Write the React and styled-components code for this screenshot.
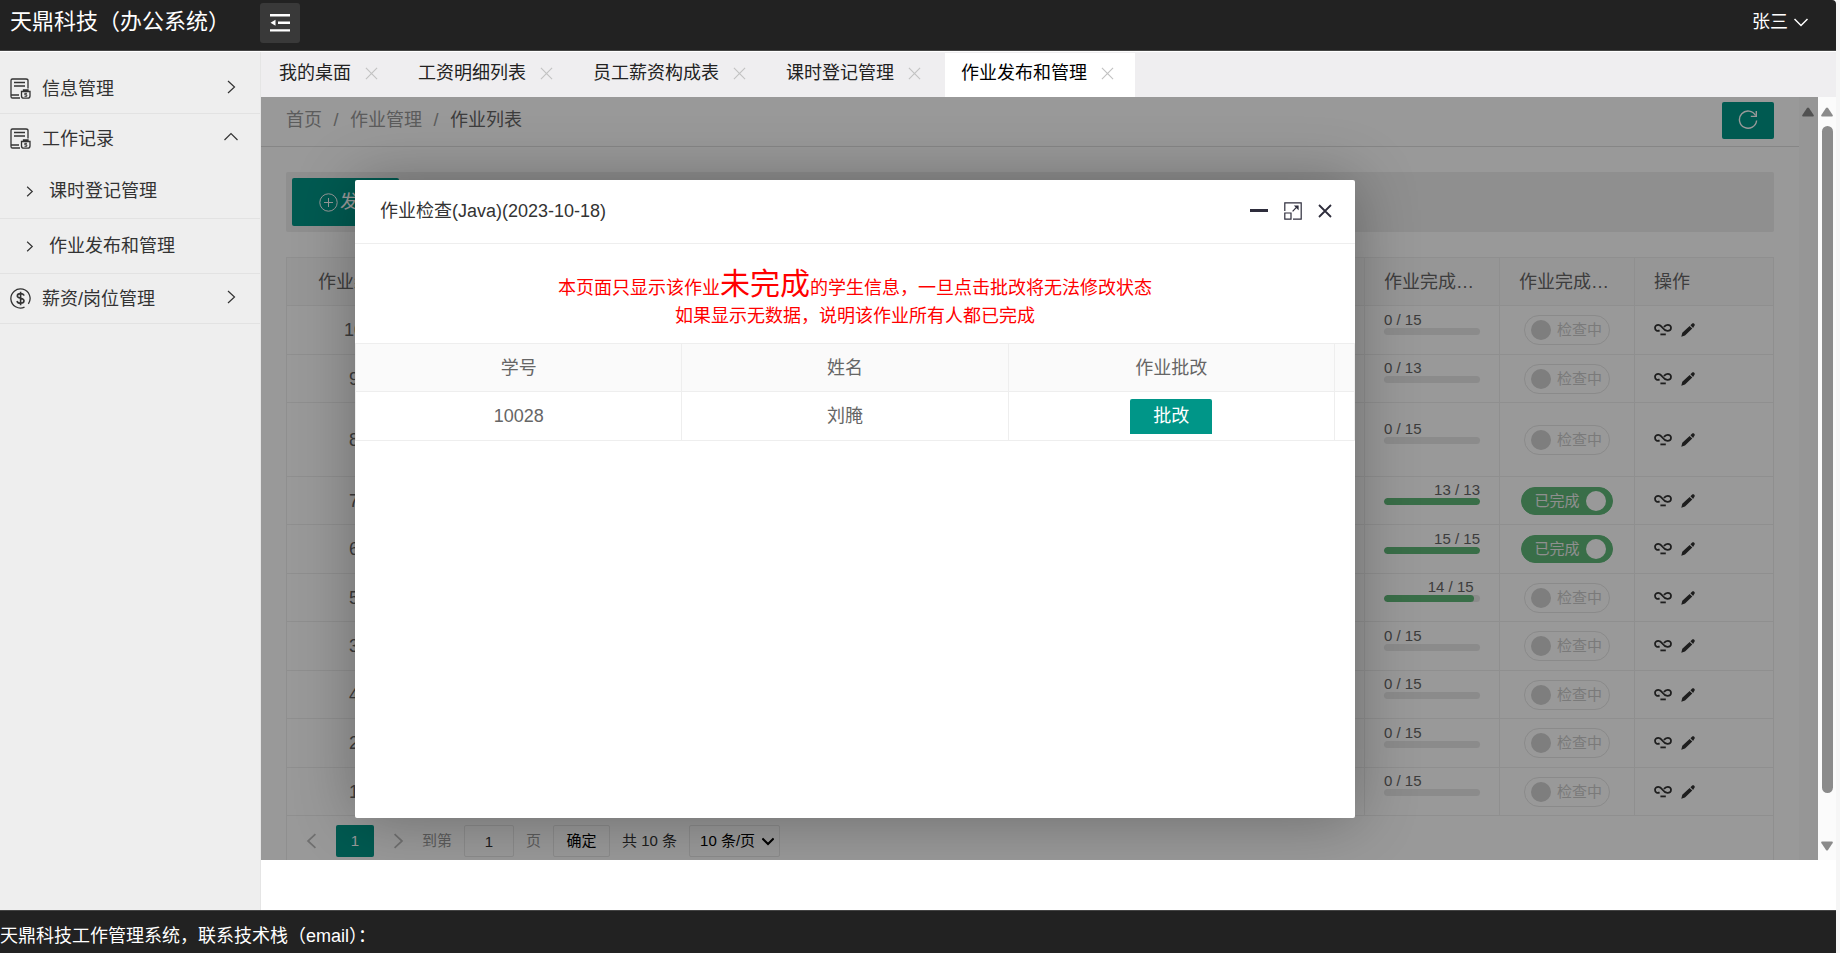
import React, { useState } from 'react';
import styled, { createGlobalStyle } from 'styled-components';

const tabs = ['我的桌面', '工资明细列表', '员工薪资构成表', '课时登记管理', '作业发布和管理'];

const homework = [
  { id: 10, done: 0, total: 15 },
  { id: 9, done: 0, total: 13 },
  { id: 8, done: 0, total: 15, tall: true },
  { id: 7, done: 13, total: 13, checked: true },
  { id: 6, done: 15, total: 15, checked: true },
  { id: 5, done: 14, total: 15 },
  { id: 3, done: 0, total: 15 },
  { id: 4, done: 0, total: 15 },
  { id: 2, done: 0, total: 15 },
  { id: 1, done: 0, total: 15 },
];

const Chevron = ({ size = 14, dir = 'right', width = 1.2 }) => {
  const d = {
    right: 'M4 1 L10.5 7 L4 13',
    left: 'M10 1 L3.5 7 L10 13',
    up: 'M0.5 10 L7 3.5 L13.5 10',
    down: 'M0.5 4 L7 10.5 L13.5 4',
  }[dir];
  return (
    <svg width={size} height={size} viewBox='0 0 14 14' fill='none' stroke='currentColor' strokeWidth={width} aria-hidden='true'>
      <path d={d} />
    </svg>
  );
};

const CrossIcon = ({ size, width = 1.2 }) => (
  <svg width={size} height={size} viewBox='0 0 14 14' fill='none' stroke='currentColor' strokeWidth={width} aria-hidden='true'>
    <path d='M1 1 L13 13 M13 1 L1 13' />
  </svg>
);

const FoldIcon = () => (
  <svg width='20' height='18' viewBox='0 0 20 18' fill='currentColor' aria-hidden='true'>
    <path d='M0 0h20v2.4H0z M8 7.6h12V10H8z M0 15.2h20v2.4H0z M0.5 8.8 L5.5 5.8 V11.8z' />
  </svg>
);

const DocIcon = () => (
  <svg width='21' height='21' viewBox='0 0 21 21' fill='none' stroke='currentColor' strokeWidth='1.3' aria-hidden='true'>
    <path d='M10 20H2.5C1.4 20 1 19.4 1 18.4V2.4C1 1.4 1.5 1 2.5 1H16C17.4 1 18 1.5 18 2.6V10.5' />
    <path d='M4 4.5H15 M4 8H15 M1 17H9' />
    <path d='M11.5 13.5H20V18C20 19.5 19 20.2 17.5 20.2H14C12.5 20.2 11.5 19.5 11.5 18Z M13.5 13V12H18V13' />
    <path d='M17 15.3H14.8V16.8H16.8V18.3H14.5' strokeWidth='1' />
  </svg>
);

const MoneyIcon = () => (
  <svg width='21' height='21' viewBox='0 0 21 21' fill='none' stroke='currentColor' strokeWidth='1.3' aria-hidden='true'>
    <path d='M14.5 19.2A9.6 9.6 0 1 1 18.4 15.9' />
    <path d='M14 7.6C13.6 6.2 12.3 5.6 10.5 5.6C8.6 5.6 7.3 6.5 7.3 7.9C7.3 11 14 9.5 14 12.8C14 14.3 12.5 15.3 10.6 15.3C8.6 15.3 7.3 14.5 7 13 M10.6 3.8V17.2' strokeWidth='1.6' />
  </svg>
);

const RefreshIcon = () => (
  <svg width='20' height='20' viewBox='0 0 20 20' fill='none' stroke='currentColor' strokeWidth='1.4' aria-hidden='true'>
    <path d='M17.6 5.5A8.6 8.6 0 1 0 18.6 10.5' />
    <path d='M18.3 1V6.4H12.8' />
  </svg>
);

const AddIcon = () => (
  <svg width='19' height='19' viewBox='0 0 19 19' fill='none' stroke='currentColor' strokeWidth='1' aria-hidden='true'>
    <circle cx='9.5' cy='9.5' r='8.7' />
    <path d='M9.5 5V14 M5 9.5H14' />
  </svg>
);

const UnlinkIcon = () => (
  <svg width='18' height='14' viewBox='0 0 18 14' fill='none' stroke='currentColor' strokeWidth='1.8' aria-hidden='true'>
    <path d='M5.6 7.4C3.2 8.6 1 7.2 1 4.8C1 2.9 2.5 1.8 4.4 1.8C8.6 1.8 8.6 7.9 13.4 7.9C15.6 7.9 17 6.6 17 4.8C17 3 15.6 1.8 13.8 1.8C12 1.8 10.8 2.6 10 4' />
    <path d='M6.4 11.4H11.8' />
  </svg>
);

const PencilIcon = () => (
  <svg width='14' height='14' viewBox='0 0 14 14' fill='currentColor' aria-hidden='true'>
    <path d='M0.3 13.7L1.3 9.8L8.6 2.9L11.3 5.6L4 12.6Z M9.4 2.2L11.2 0.5C11.8 0 12.5 0 13 0.6L13.4 1C14 1.6 13.9 2.3 13.4 2.8L12.1 4.9Z' />
  </svg>
);

const MaxIcon = () => (
  <svg width='18' height='18' viewBox='0 0 18 18' fill='none' stroke='currentColor' strokeWidth='1.2' aria-hidden='true'>
    <path d='M0.8 9V0.8H17.2V17.2H9' />
    <path d='M0.8 11H7V17.2H0.8Z' />
    <path d='M8.6 9.4L13.6 4.2' />
    <path d='M9.8 3.4H14.6V8.2Z' fill='currentColor' stroke='none' />
  </svg>
);

const ArrowIcon = ({ down }) => (
  <svg width='12' height='10' viewBox='0 0 12 10' fill='currentColor' aria-hidden='true'>
    <path d={down ? 'M1 0.5H11Q12.4 0.8 11.5 2.2L7 9Q6 10 5 9L0.5 2.2Q-0.4 0.8 1 0.5Z' : 'M1 9.5H11Q12.4 9.2 11.5 7.8L7 1Q6 0 5 1L0.5 7.8Q-0.4 9.2 1 9.5Z'} />
  </svg>
);

const App = () => {
  const [rows, setRows] = useState(homework);
  const [open, setOpen] = useState(true);

  const toggle = (id) => {
    setRows(rows.map((r) => (r.id === id ? { ...r, checked: !r.checked } : r)));
  };

  return (
    <>
      <GlobalStyle />
      <Shell>
        <Header>
          <Logo>天鼎科技（办公系统）</Logo>
          <FoldButton type='button' aria-label='fold'><FoldIcon /></FoldButton>
          <User href='#user'>张三 <Chevron dir='down' width={1.5} /></User>
        </Header>
        <Body>
          <Sidebar>
            <MenuItem href='#info'><DocIcon /><span>信息管理</span><Chevron /></MenuItem>
            <MenuItem href='#work' $open><DocIcon /><span>工作记录</span><Chevron dir='up' /></MenuItem>
            <SubItem href='#lesson'><Chevron size={11} width={1.5} /><span>课时登记管理</span></SubItem>
            <SubItem href='#homework'><Chevron size={11} width={1.5} /><span>作业发布和管理</span></SubItem>
            <MenuItem href='#salary'><MoneyIcon /><span>薪资/岗位管理</span><Chevron /></MenuItem>
          </Sidebar>
          <Main>
            <TabBar>
              {tabs.map((t, i) => (
                <Tab key={t} $active={i === tabs.length - 1}>
                  <span>{t}</span>
                  <TabClose type='button' aria-label='close'><CrossIcon size={13} /></TabClose>
                </Tab>
              ))}
            </TabBar>
            <FrameRow>
              <Frame>
                <Page>
                  <Crumbs>
                    <a href='#home'>首页</a><i>/</i><a href='#manage'>作业管理</a><i>/</i><strong>作业列表</strong>
                    <Refresh type='button' aria-label='refresh'><RefreshIcon /></Refresh>
                  </Crumbs>
                  <Content>
                    <Toolbar>
                      <Publish type='button' onClick={() => setOpen(true)}><AddIcon />发布</Publish>
                    </Toolbar>
                    <TableBox>
                      <Table>
                        <colgroup>
                          <Col $w={135} /><col /><Col $w={135} /><Col $w={135} /><Col $w={138} />
                        </colgroup>
                        <thead>
                          <tr>
                            <Th $center>作业编号</Th><Th /><Th>作业完成…</Th><Th>作业完成…</Th><Th>操作</Th>
                          </tr>
                        </thead>
                        <tbody>
                          {rows.map((r) => (
                            <Row key={r.id} $tall={r.tall}>
                              <Td $center>{r.id}</Td>
                              <Td />
                              <Td>
                                <Progress>
                                  <ProgressText style={r.done ? { width: `${(r.done / r.total) * 100}%` } : undefined} $end={r.done > 0}>
                                    {r.done} / {r.total}
                                  </ProgressText>
                                  <Track><Fill style={{ width: `${(r.done / r.total) * 100}%` }} /></Track>
                                </Progress>
                              </Td>
                              <Td $center>
                                <Switch $on={r.checked}>
                                  <input type='checkbox' checked={!!r.checked} onChange={() => toggle(r.id)} />
                                  {r.checked ? '已完成' : '检查中'}
                                </Switch>
                              </Td>
                              <Td>
                                <Actions>
                                  <button type='button' aria-label='check' onClick={() => setOpen(true)}><UnlinkIcon /></button>
                                  <button type='button' aria-label='edit'><PencilIcon /></button>
                                </Actions>
                              </Td>
                            </Row>
                          ))}
                        </tbody>
                      </Table>
                      <Pager>
                        <Arrow type='button' aria-label='prev'><Chevron size={16} dir='left' width={1.5} /></Arrow>
                        <Current type='button'>1</Current>
                        <Arrow type='button' aria-label='next'><Chevron size={16} width={1.5} /></Arrow>
                        <Skip>
                          <label htmlFor='page'>到第</label>
                          <input id='page' defaultValue='1' />
                          <label htmlFor='page'>页</label>
                          <button type='button'>确定</button>
                        </Skip>
                        <Count>共 10 条</Count>
                        <Limit>
                          <select aria-label='limit' defaultValue='10'>
                            <option value='10'>10 条/页</option>
                          </select>
                          <Chevron size={12} dir='down' width={2.4} />
                        </Limit>
                      </Pager>
                    </TableBox>
                  </Content>
                </Page>
                <InnerBar><ArrowIcon /></InnerBar>
                {open && (
                  <>
                    <Shade />
                    <Dialog role='dialog' aria-labelledby='dialog-title'>
                      <DialogHead>
                        <h2 id='dialog-title'>作业检查(Java)(2023-10-18)</h2>
                        <MinButton type='button' aria-label='min' />
                        <HeadButton type='button' aria-label='max'><MaxIcon /></HeadButton>
                        <HeadButton type='button' aria-label='close' onClick={() => setOpen(false)}><CrossIcon size={14} width={1.8} /></HeadButton>
                      </DialogHead>
                      <Notice>
                        本页面只显示该作业<big>未完成</big>的学生信息，一旦点击批改将无法修改状态<br />
                        如果显示无数据，说明该作业所有人都已完成
                      </Notice>
                      <StudentTable>
                        <colgroup>
                          <col /><col /><col /><Col $w={20} />
                        </colgroup>
                        <thead>
                          <tr><th>学号</th><th>姓名</th><th>作业批改</th><th /></tr>
                        </thead>
                        <tbody>
                          <tr>
                            <td>10028</td>
                            <td>刘腌</td>
                            <td><Correct type='button'>批改</Correct></td>
                            <td />
                          </tr>
                        </tbody>
                      </StudentTable>
                    </Dialog>
                  </>
                )}
              </Frame>
              <ScrollBar>
                <ArrowIcon />
                <Thumb />
                <Rest />
                <ArrowIcon down />
              </ScrollBar>
            </FrameRow>
          </Main>
        </Body>
        <Footer>天鼎科技工作管理系统，联系技术栈（email）：</Footer>
      </Shell>
    </>
  );
};

const GlobalStyle = createGlobalStyle`
  * {
    box-sizing: border-box;
  }
  body {
    margin: 0;
    background: #f6f6f6;
    color: #333;
    font-family: 'Liberation Sans', 'Noto Sans CJK SC', sans-serif;
    font-size: 18px;
    line-height: 24px;
  }
  button, input, select {
    font: inherit;
    color: inherit;
    margin: 0;
    padding: 0;
    border: none;
    background: none;
  }
  button {
    cursor: pointer;
  }
  a {
    color: inherit;
    text-decoration: none;
  }
`;

const Shell = styled.div`
  height: 100vh;
  margin-right: 4px;
  display: flex;
  flex-direction: column;
  background: #fff;
  white-space: nowrap;
`;

const Header = styled.header`
  height: 51px;
  flex-shrink: 0;
  display: flex;
  align-items: flex-start;
  padding: 3px 28px 0 10px;
  background: #222;
  border-bottom: 1px solid #444;
  border-radius: 0 4px 0 0;
  color: #fff;
`;

const Logo = styled.h1`
  width: 250px;
  margin: 0;
  font-size: 22px;
  font-weight: normal;
  line-height: 38px;
`;

const FoldButton = styled.button`
  width: 40px;
  height: 40px;
  display: flex;
  align-items: center;
  justify-content: center;
  border-radius: 3px;
  background: #393939;
`;

const User = styled.a`
  margin-left: auto;
  display: flex;
  align-items: center;
  gap: 6px;
  line-height: 38px;
`;

const Body = styled.div`
  flex: 1;
  min-height: 0;
  display: flex;
  padding-top: 1px;
`;

const Sidebar = styled.nav`
  width: 261px;
  flex-shrink: 0;
  padding-top: 12px;
  background: #eee;
  border-right: 1px solid #e5e5e5;
`;

const MenuItem = styled.a`
  height: 50px;
  display: flex;
  align-items: center;
  padding: 0 22px 0 10px;
  border-bottom: 1px solid ${(p) => (p.$open ? 'transparent' : '#e2e2e2')};
  span {
    flex: 1;
    margin-left: 11px;
  }
  svg:last-child {
    margin-bottom: 4px;
  }
`;

const SubItem = styled.a`
  height: 55px;
  display: flex;
  align-items: center;
  gap: 14px;
  padding-left: 24px;
  border-bottom: 1px solid #e2e2e2;
`;

const Main = styled.main`
  flex: 1;
  min-width: 0;
  display: flex;
  flex-direction: column;
  padding-bottom: 50px;
`;

const TabBar = styled.div`
  height: 45px;
  flex-shrink: 0;
  display: flex;
  gap: 3px;
  padding: 1px 2px 0;
  background: #efeef0;
`;

const Tab = styled.div`
  display: flex;
  align-items: center;
  padding: 0 21px 4px 16px;
  color: ${(p) => (p.$active ? '#000' : '#222')};
  background: ${(p) => (p.$active ? '#fff' : 'transparent')};
`;

const TabClose = styled.button`
  display: flex;
  margin-left: 14px;
  color: #c2c2c2;
`;

const FrameRow = styled.div`
  flex: 1;
  min-height: 0;
  display: flex;
`;

const Frame = styled.section`
  position: relative;
  flex: 1;
  min-width: 0;
  display: flex;
  overflow: hidden;
  background: #fff;
`;

const Page = styled.div`
  flex: 1;
  min-width: 0;
  overflow: hidden;
`;

const InnerBar = styled.div`
  width: 19px;
  padding: 2px 3px;
  background: #fbfbfb;
  color: #888;
`;

const ScrollBar = styled.div`
  width: 18px;
  display: flex;
  flex-direction: column;
  align-items: center;
  padding: 10px 0 9px;
  background: #fbfbfb;
  color: #8b8b8b;
  svg {
    flex-shrink: 0;
  }
`;

const Thumb = styled.div`
  width: 11px;
  flex: 14;
  margin-top: 9px;
  border-radius: 6px;
  background: #8b8b8b;
`;

const Rest = styled.div`
  flex: 1;
`;

const Crumbs = styled.div`
  height: 50px;
  display: flex;
  align-items: center;
  padding: 0 25px 3px;
  border-bottom: 1px solid #e0e0e0;
  color: #999;
  i {
    width: 28px;
    text-align: center;
    font-style: normal;
  }
  strong {
    font-weight: normal;
    color: #666;
  }
`;

const Refresh = styled.button`
  width: 52px;
  height: 37px;
  margin-left: auto;
  display: flex;
  align-items: center;
  justify-content: center;
  border-radius: 2px;
  background: #009688;
  color: #fff;
`;

const Content = styled.div`
  display: flex;
  flex-direction: column;
  gap: 25px;
  padding: 25px;
`;

const Toolbar = styled.div`
  padding: 6px;
  background: #eee;
  border-radius: 2px;
`;

const Publish = styled.button`
  height: 48px;
  display: flex;
  align-items: center;
  gap: 2px;
  padding: 0 23px 0 27px;
  border-radius: 2px;
  background: #009688;
  color: #fff;
`;

const TableBox = styled.div`
  border: 1px solid #eee;
`;

const Table = styled.table`
  width: 100%;
  table-layout: fixed;
  border-collapse: separate;
  border-spacing: 0;
  color: #666;
`;

const Col = styled.col`
  width: ${(p) => p.$w}px;
`;

const Td = styled.td`
  height: inherit;
  padding: 0 19px;
  border-right: 1px solid #eee;
  border-bottom: 1px solid #eee;
  text-align: ${(p) => (p.$center ? 'center' : 'left')};
  &:last-child {
    border-right: none;
  }
`;

const Th = styled(Td).attrs({ as: 'th' })`
  height: 48px;
  font-weight: normal;
  background: #fafafa;
`;

const Row = styled.tr`
  height: ${(p) => (p.$tall ? 74 : 49)}px;
  &:nth-child(even) {
    height: 48px;
  }
`;

const Progress = styled.div`
  padding-bottom: 14px;
  font-size: 15px;
  line-height: 16px;
`;

const ProgressText = styled.div`
  text-align: ${(p) => (p.$end ? 'right' : 'left')};
`;

const Track = styled.div`
  height: 7px;
  border-radius: 4px;
  background: #e8e8e8;
  overflow: hidden;
`;

const Fill = styled.div`
  height: 100%;
  border-radius: 4px;
  background: #5fb878;
`;

const Switch = styled.label`
  height: ${(p) => (p.$on ? 28 : 30)}px;
  display: inline-flex;
  flex-direction: ${(p) => (p.$on ? 'row-reverse' : 'row')};
  align-items: center;
  gap: 6px;
  padding: ${(p) => (p.$on ? '0 6px 0 12px' : '0 7px 0 6px')};
  border: 1px solid ${(p) => (p.$on ? '#5fb878' : '#e6e6e6')};
  border-radius: 15px;
  background: ${(p) => (p.$on ? '#5fb878' : 'transparent')};
  color: ${(p) => (p.$on ? '#eee' : '#ccc')};
  font-size: 15px;
  vertical-align: middle;
  input {
    appearance: none;
    width: 20px;
    height: 20px;
    border-radius: 50%;
    background: ${(p) => (p.$on ? '#fff' : '#d2d2d2')};
  }
`;

const Actions = styled.div`
  display: flex;
  align-items: center;
  gap: 9px;
  color: #333;
  button {
    display: flex;
  }
`;

const Pager = styled.div`
  display: flex;
  align-items: center;
  gap: 12px;
  padding: 9px 13px;
  font-size: 15px;
  line-height: 20px;
`;

const Arrow = styled.button`
  width: 24px;
  display: flex;
  justify-content: center;
  color: #bbb;
`;

const Current = styled.button`
  width: 38px;
  height: 32px;
  border-radius: 2px;
  background: #009688;
  color: #fff;
`;

const Skip = styled.div`
  display: flex;
  align-items: center;
  gap: 12px;
  color: #999;
  input, button {
    height: 32px;
    border: 1px solid #e8e8e8;
    border-radius: 2px;
    color: #333;
    text-align: center;
  }
  input {
    width: 50px;
  }
  button {
    width: 57px;
    color: #000;
  }
`;

const Count = styled.span`
  color: #333;
`;

const Limit = styled.span`
  width: 91px;
  height: 32px;
  display: flex;
  align-items: center;
  justify-content: space-between;
  padding: 0 5px 0 10px;
  border: 1px solid #e8e8e8;
  border-radius: 2px;
  color: #000;
  select {
    appearance: none;
  }
`;

const Shade = styled.div`
  position: absolute;
  inset: 0;
  background: rgba(0, 0, 0, 0.4);
`;

const Dialog = styled.div`
  position: absolute;
  left: 94px;
  top: 83px;
  width: 1000px;
  height: 638px;
  border-radius: 2px;
  background: #fff;
  box-shadow: 1px 1px 62px rgba(0, 0, 0, 0.3);
`;

const DialogHead = styled.div`
  height: 64px;
  display: flex;
  align-items: center;
  gap: 16px;
  padding: 0 23px 2px 25px;
  border-bottom: 1px solid #eee;
  h2 {
    flex: 1;
    margin: 0;
    font-size: 18px;
    font-weight: normal;
  }
`;

const HeadButton = styled.button`
  display: flex;
  color: #2e2d3c;
`;

const MinButton = styled.button`
  width: 18px;
  height: 3px;
  background: #2e2d3c;
`;

const Notice = styled.p`
  margin: 0;
  padding: 26px 0 13px;
  color: #f00;
  line-height: 28px;
  text-align: center;
  big {
    font-size: 30px;
  }
`;

const StudentTable = styled.table`
  width: 100%;
  table-layout: fixed;
  border-collapse: separate;
  border-spacing: 0;
  border-top: 1px solid #eee;
  border-left: 1px solid #eee;
  color: #666;
  text-align: center;
  th, td {
    height: 48px;
    padding: 0;
    border-right: 1px solid #eee;
    border-bottom: 1px solid #eee;
  }
  td {
    height: 49px;
  }
  th {
    font-weight: normal;
    background: #fafafa;
  }
`;

const Correct = styled.button`
  width: 82px;
  height: 35px;
  border-radius: 2px 2px 0 0;
  background: #009688;
  color: #fff;
  vertical-align: middle;
`;

const Footer = styled.footer`
  height: 43px;
  flex-shrink: 0;
  padding-top: 13px;
  background: #222;
  border-top: 1px solid #444;
  color: #fff;
`;

export default App;
